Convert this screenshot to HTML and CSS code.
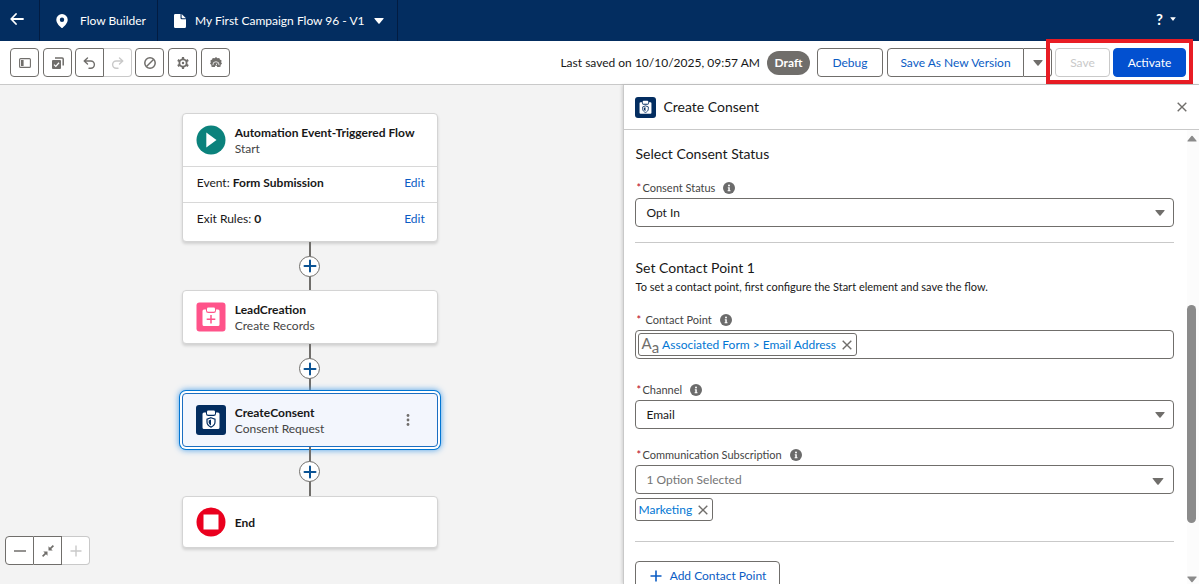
FILE: index.html
```html
<!DOCTYPE html>
<html lang="en">
<head>
<meta charset="utf-8">
<title>Flow Builder</title>
<link rel="stylesheet" href="styles.css">
</head>
<body>
<svg class="defs" aria-hidden="true">
  <symbol id="consent" viewBox="0 0 30 30">
    <path fill="#fff" d="M7 7.500h3v1.200A2.300 2.300 0 0 0 12.300 11h5.400A2.300 2.300 0 0 0 20 8.700V7.500h2A1.500 1.500 0 0 1 23.500 9v13.500A1.500 1.500 0 0 1 22 24H8a1.500 1.500 0 0 1-1.500-1.500V9A1.500 1.500 0 0 1 8 7.500z"/>
    <rect x="11" y="5.500" width="8" height="4.200" rx="1.300" fill="#fff"/>
    <path fill="#fff" stroke="#032d60" stroke-width="1.200" d="M15 12.700l4 1.400v3c0 2.400-1.700 4.100-4 5-2.300-.9-4-2.600-4-5v-3z"/>
    <path fill="#032d60" d="M15 14.500l-2.300.9v1.900c0 1.400.9 2.500 2.300 3.200z"/>
  </symbol>
  <symbol id="down" viewBox="0 0 10 6"><path fill="currentColor" d="M.8 0h8.400q.8 0 .3.700L5.600 5.500q-.6.700-1.200 0L.5.700Q0 0 .8 0z"/></symbol>
  <symbol id="close" viewBox="0 0 10 10"><path fill="none" stroke="currentColor" stroke-width="1.400" d="M.7.700l8.600 8.600M9.300.700L.7 9.300"/></symbol>
  <symbol id="plus" viewBox="0 0 14 14"><path fill="none" stroke="currentColor" stroke-width="2" stroke-linecap="round" d="M7 1.500v11M1.500 7h11"/></symbol>
  <symbol id="info" viewBox="0 0 12 12"><circle cx="6" cy="6" r="6" fill="#6b6b6b"/><circle cx="6" cy="3.400" r="1" fill="#fff"/><path fill="#fff" d="M4.800 5.200h2v3h.7v1H4.600v-1h.7v-2h-.5z"/></symbol>
</svg>

<header class="topbar">
  <button class="back" aria-label="Back"><svg width="14" height="12" viewBox="0 0 14 12"><path fill="none" stroke="#fff" stroke-width="1.800" stroke-linecap="round" stroke-linejoin="round" d="M6 1L1.200 6 6 11M1.500 6H13"/></svg></button>
  <div class="app">
    <svg width="12" height="14" viewBox="0 0 12 14"><path fill="#fff" fill-rule="evenodd" d="M6 0a5.700 5.700 0 0 1 5.700 5.700c0 3.300-3.300 6.400-5 8q-.7.500-1.400 0c-1.700-1.600-5-4.700-5-8A5.700 5.700 0 0 1 6 0zm0 3.500a2.200 2.200 0 1 0 0 4.400 2.200 2.200 0 0 0 0-4.400z"/></svg>
    <span>Flow Builder</span>
  </div>
  <button class="flow-name">
    <svg width="12" height="14" viewBox="0 0 12 14"><path fill="#fff" d="M1.300 0h5.200v4q0 1.300 1.300 1.300H12v7.200q0 1.500-1.300 1.500H1.300Q0 14 0 12.700V1.300Q0 0 1.300 0zM7.600 0L12 4.300H8.300q-.7 0-.7-.7z"/></svg>
    <span>My First Campaign Flow 96 - V1</span>
    <svg width="10" height="6"><use href="#down"/></svg>
  </button>
  <button class="help" aria-label="Help"><span>?</span><svg width="6" height="4"><use href="#down"/></svg></button>
</header>

<div class="toolbar">
  <div class="tools">
    <button class="tool" aria-label="Toggle toolbox"><svg width="12" height="10" viewBox="0 0 12 10"><rect x=".6" y=".6" width="10.800" height="8.800" rx="1" fill="none" stroke="#706e6b" stroke-width="1.100"/><path fill="#706e6b" d="M2 2h2.600v6H2z"/></svg></button>
    <button class="tool" aria-label="Select elements"><svg width="12" height="12" viewBox="0 0 12 12"><path fill="none" stroke="#706e6b" stroke-width="1.500" d="M3 1h7.200q1 0 1 1v6.500"/><rect x="0" y="3" width="9" height="9" rx="1" fill="#706e6b"/><path fill="none" stroke="#fff" stroke-width="1.300" d="M2 7.600l1.800 1.800L7 5.800"/></svg></button>
  </div>
  <div class="pair">
    <button class="tool" aria-label="Undo"><svg width="13" height="12" viewBox="0 0 13 12"><path fill="none" stroke="#706e6b" stroke-width="1.400" stroke-linecap="round" stroke-linejoin="round" d="M4.500 1L1.200 4l3.300 3M1.500 4h6.300a3.600 3.600 0 0 1 0 7.200H6"/></svg></button>
    <button class="tool off" disabled aria-label="Redo"><svg width="13" height="12" viewBox="0 0 13 12"><path fill="none" stroke="#c9c9c9" stroke-width="1.400" stroke-linecap="round" stroke-linejoin="round" d="M8.500 1l3.300 3-3.300 3M11.500 4H5.200a3.600 3.600 0 0 0 0 7.200H7"/></svg></button>
  </div>
  <div class="tools">
    <button class="tool" aria-label="Errors"><svg width="12" height="12" viewBox="0 0 12 12"><circle cx="6" cy="6" r="5.200" fill="none" stroke="#706e6b" stroke-width="1.500"/><path stroke="#706e6b" stroke-width="1.500" d="M2.500 9.500l7-7"/></svg></button>
    <button class="tool" aria-label="Settings"><svg width="12" height="12" viewBox="0 0 12 12"><circle cx="6" cy="6" r="3.600" fill="none" stroke="#706e6b" stroke-width="1.800"/><circle cx="6" cy="6" r="1.200" fill="#706e6b"/><path stroke="#706e6b" stroke-width="2.200" d="M6 0v2.400M6 9.600V12M.8 3l2 1.200M9.200 7.800l2 1.200M.8 9l2-1.200M9.200 4.200l2-1.200"/></svg></button>
    <button class="tool" aria-label="Assistant"><svg width="12" height="11" viewBox="0 0 12 11"><path fill="#706e6b" d="M6 0l1.400 1.200 1.900-.3.600 1.700 1.700.9-.4 1.700.8 1.500-1.300 1.100-.2 1.900-1.700.2H2.900l-1.400-.2-.2-1.900L0 6.700l.8-1.500L.4 3.500l1.700-.9.600-1.700 1.900.3z"/><path fill="none" stroke="#fff" stroke-width=".8" d="M2.900 8.200q-.3-3.500 3.100-3.500t3.100 3.500M6 8.500l1-2"/><path fill="#fff" d="M4.800 10a1.200 1.200 0 0 1 2.400 0z"/></svg></button>
  </div>
  <span class="saved">Last saved on 10/10/2025, 09:57 AM</span>
  <span class="badge">Draft</span>
  <button class="btn debug">Debug</button>
  <div class="split">
    <button class="btn version">Save As New Version</button>
    <button class="btn more" aria-label="More save options"><svg width="10" height="6"><use href="#down"/></svg></button>
  </div>
  <div class="primary-actions">
    <button class="btn save" disabled>Save</button>
    <button class="btn activate">Activate</button>
  </div>
</div>

<main class="workspace">
  <section class="canvas">
    <article class="card start">
      <div class="card-head">
        <svg width="30" height="30" viewBox="0 0 30 30"><circle cx="15" cy="15" r="14.500" fill="#0b827c"/><path fill="#fff" d="M10.300 7.500v15L20.500 15z"/></svg>
        <div><h3>Automation Event-Triggered Flow</h3><p>Start</p></div>
      </div>
      <div class="card-row"><span>Event: <b>Form Submission</b></span><a href="#event">Edit</a></div>
      <div class="card-row last"><span>Exit Rules: <b>0</b></span><a href="#exit">Edit</a></div>
    </article>
    <div class="connector"><button class="add" aria-label="Add element"><svg width="14" height="14"><use href="#plus"/></svg></button></div>
    <article class="card">
      <div class="card-head">
        <svg width="30" height="30" viewBox="0 0 30 30"><rect x=".5" y=".5" width="29" height="29" rx="3" fill="#ff538a"/><path fill="#fff" d="M7 7.500h3v1.200A2.300 2.300 0 0 0 12.300 11h5.400A2.300 2.300 0 0 0 20 8.700V7.500h2A1.500 1.500 0 0 1 23.500 9v13.500A1.500 1.500 0 0 1 22 24H8a1.500 1.500 0 0 1-1.500-1.500V9A1.500 1.500 0 0 1 8 7.500z"/><rect x="11" y="5.500" width="8" height="4.200" rx="1.300" fill="#fff"/><path stroke="#ff538a" stroke-width="1.500" d="M15 13v8.500M10.700 17.200h8.600"/></svg>
        <div><h3>LeadCreation</h3><p>Create Records</p></div>
      </div>
    </article>
    <div class="connector"><button class="add" aria-label="Add element"><svg width="14" height="14"><use href="#plus"/></svg></button></div>
    <article class="card selected">
      <div class="card-head">
        <svg class="navy" width="30" height="30"><use href="#consent"/></svg>
        <div><h3>CreateConsent</h3><p>Consent Request</p></div>
        <button class="kebab" aria-label="More actions"><svg width="4" height="12" viewBox="0 0 4 12"><g fill="#706e6b"><circle cx="2" cy="1.500" r="1.400"/><circle cx="2" cy="6" r="1.400"/><circle cx="2" cy="10.500" r="1.400"/></g></svg></button>
      </div>
    </article>
    <div class="connector"><button class="add" aria-label="Add element"><svg width="14" height="14"><use href="#plus"/></svg></button></div>
    <article class="card end">
      <div class="card-head">
        <svg width="30" height="30" viewBox="0 0 30 30"><circle cx="15" cy="15" r="14.500" fill="#ea001e"/><path fill="#fff" d="M7.500 7.500h15v15h-15z"/></svg>
        <div><h3>End</h3></div>
      </div>
    </article>

    <div class="zoom">
      <button class="tool" aria-label="Zoom out"><svg width="12" height="12" viewBox="0 0 12 12"><path stroke="#706e6b" stroke-width="1.500" d="M0 6h12"/></svg></button>
      <button class="tool" aria-label="Fit to view"><svg width="12" height="12" viewBox="0 0 12 12"><path fill="#706e6b" d="M6.500 5.500V1.300l1.500 1.500L10.800 0 12 1.200 9.200 4l1.500 1.500zM5.500 6.500v4.200L4 9.200 1.200 12 0 10.800 2.800 8 1.300 6.500z"/></svg></button>
      <button class="tool off" disabled aria-label="Zoom in"><svg width="12" height="12" viewBox="0 0 12 12"><path stroke="#c9c9c9" stroke-width="1.400" d="M6 .5v11M.5 6h11"/></svg></button>
    </div>
  </section>

  <aside class="panel">
    <div class="panel-head">
      <svg class="navy" width="21" height="21"><use href="#consent"/></svg>
      <h2>Create Consent</h2>
      <button class="x" aria-label="Close panel"><svg width="10" height="10"><use href="#close"/></svg></button>
    </div>
    <div class="panel-body">
      <form class="form">
        <h2>Select Consent Status</h2>
        <div class="label status-label"><abbr>*</abbr><label for="status">Consent Status</label><svg width="12" height="12"><use href="#info"/></svg></div>
        <div class="field"><select id="status"><option>Opt In</option></select><svg class="arrow" width="10" height="6"><use href="#down"/></svg></div>
        <hr class="rule-one">
        <h2>Set Contact Point 1</h2>
        <p class="hint">To set a contact point, first configure the Start element and save the flow.</p>
        <div class="label point-label"><abbr>*</abbr><label for="point">Contact Point</label><svg width="12" height="12"><use href="#info"/></svg></div>
        <div class="field combo">
          <span class="pill"><span class="type"><span>A</span><span class="small">a</span></span><a href="#point">Associated Form &gt; Email Address</a><button type="button" class="x" aria-label="Remove"><svg width="10" height="10"><use href="#close"/></svg></button></span>
          <input id="point" type="text">
        </div>
        <div class="label channel-label"><abbr>*</abbr><label for="channel">Channel</label><svg width="12" height="12"><use href="#info"/></svg></div>
        <div class="field"><select id="channel"><option>Email</option></select><svg class="arrow" width="10" height="6"><use href="#down"/></svg></div>
        <div class="label sub-label"><abbr>*</abbr><label for="sub">Communication Subscription</label><svg width="12" height="12"><use href="#info"/></svg></div>
        <div class="field"><input id="sub" type="text" placeholder="1 Option Selected"><svg class="arrow wide" width="12" height="7"><use href="#down"/></svg></div>
        <span class="pill tag"><a href="#marketing">Marketing</a><button type="button" class="x" aria-label="Remove Marketing"><svg width="10" height="10"><use href="#close"/></svg></button></span>
        <hr class="rule-two">
        <button type="button" class="btn add-point"><svg width="12" height="12" viewBox="0 0 12 12"><path stroke="currentColor" stroke-width="1.600" d="M6 .5v11M.5 6h11"/></svg>Add Contact Point</button>
      </form>
      <div class="scrollbar" aria-hidden="true">
        <svg class="up" width="10" height="7"><use href="#down"/></svg>
        <div class="track"><div class="thumb"></div></div>
        <svg width="10" height="7"><use href="#down"/></svg>
      </div>
    </div>
  </aside>
</main>
</body>
</html>
```
FILE: styles.css
```css
* { box-sizing: border-box; }
body {
  margin: 0;
  height: 100vh;
  display: flex;
  flex-direction: column;
  overflow: hidden;
  font: 12px/16px Lato, "Open Sans", sans-serif;
  color: #181818;
  background: #fff;
}
button, input, select { font: inherit; color: inherit; }
button { padding: 0; border: 0; background: none; display: flex; align-items: center; justify-content: center; }
h2, h3, p { margin: 0; }
a { color: #0b5cc4; text-decoration: none; }
svg { display: block; flex: none; }
.defs { position: absolute; width: 0; height: 0; }

.topbar { flex: 0 0 41px; display: flex; align-items: stretch; background: #032d60; color: #fff; }
.topbar > * { padding-bottom: 3px; }
.back { width: 40px; padding-right: 6px; border-right: 1px solid #021c42; }
.app { display: flex; align-items: center; gap: 12px; padding: 0 11px 0 16px; border-right: 1px solid #021c42; }
.flow-name { gap: 9px; padding: 0 13px 0 16px; border-right: 1px solid #021c42; }
.help { margin-left: auto; padding-right: 23px; gap: 7px; font-weight: 700; font-size: 15px; }

.toolbar { flex: 0 0 44px; display: flex; align-items: center; padding: 0 13px 0 10px; gap: 3px; border-bottom: 1px solid #c9c9c9; }
.tools { display: flex; gap: 4px; }
.pair, .zoom, .split { display: flex; }
.tool { width: 29px; height: 29px; border: 1px solid #706e6b; border-radius: 4px; background: #fff; }
.tool.off { border-color: #c9c9c9; }
.pair .tool:first-child, .zoom .tool:not(:last-child) { border-radius: 4px 0 0 4px; }
.pair .tool:last-child, .zoom .tool:last-child { border-radius: 0 4px 4px 0; border-left: 0; width: 28px; }
.saved { margin-left: auto; white-space: nowrap; }
.badge { width: 43px; margin: 0 4px; padding: 4px 0; border-radius: 12px; background: #706e6b; color: #fff; font-weight: 700; text-align: center; }
.btn { height: 29px; border: 1px solid #706e6b; border-radius: 4px; background: #fff; color: #0b5cc4; white-space: nowrap; }
.debug { width: 66px; }
.split { margin-left: 1px; }
.version { width: 137px; border-radius: 4px 0 0 4px; }
.more { width: 28px; border-left: 0; border-radius: 0 4px 4px 0; color: #706e6b; }
.primary-actions { position: relative; display: flex; gap: 3px; }
.primary-actions::after { content: ""; position: absolute; inset: -9px -7px -7px -9px; border: 4px solid #e81c24; pointer-events: none; }
.save { width: 55px; border-color: #c9c9c9; color: #c9c9c9; }
.activate { width: 73px; border-color: #0250d0; background: #0250d0; color: #fff; }

.workspace { flex: 1; min-height: 0; display: flex; }
.canvas { position: relative; flex: 1; min-width: 0; display: flex; flex-direction: column; align-items: center; padding: 28px 4px 0 0; background: #f3f3f3; overflow: hidden; }
.card { width: 256px; flex: none; border: 1px solid #d4d4d4; border-radius: 4px; background: #fff; box-shadow: 0 2px 3px rgba(0, 0, 0, .14); }
.card-head { display: flex; align-items: center; gap: 9px; height: 52px; padding: 0 13px; }
.card-head h3 { font-size: 12px; line-height: 17px; font-weight: 700; white-space: nowrap; }
.card-head p { color: #444; line-height: 16px; }
.card-row { display: flex; justify-content: space-between; height: 36px; padding: 8px 12px 0 14px; border-top: 1px solid #d8d8d8; }
.card-row.last { height: 39px; }
.card.end .card-head { height: 50px; }
.card.selected { background: #f3f6fd; border-color: #1b6ec2; box-shadow: 0 0 0 2px #fff, 0 0 0 3px #0176d3, 0 0 6px 3px #4a9fea; }
.kebab { margin-left: auto; width: 24px; height: 24px; margin-right: 4px; }
.connector { width: 2px; height: 49px; flex: none; background: #706e6b; display: flex; justify-content: center; align-items: center; }
.start + .connector { height: 48px; }
.add { width: 21px; height: 21px; flex: none; border: 1px solid #706e6b; border-radius: 50%; background: #fff; color: #0b5394; }
.zoom { position: absolute; left: 5px; bottom: 19px; }
.zoom .tool:nth-child(2) { border-left: 0; border-radius: 0; width: 28px; }
.navy { background: #032d60; border-radius: 3px; }

.panel { position: relative; flex: 0 0 48%; display: flex; flex-direction: column; border-left: 1px solid #c9c9c9; box-shadow: -1px 0 3px rgba(0, 0, 0, .15); background: #fff; }
.panel h2 { font-size: 14px; line-height: 22px; font-weight: 400; }
.panel-head { flex: 0 0 45px; display: flex; align-items: center; gap: 7px; padding: 0 12px 0 11px; border-bottom: 1px solid #c9c9c9; }
.panel-head .x { margin-left: auto; }
.x { color: #706e6b; }
.panel-body { flex: 1; min-height: 0; display: flex; }
.form { flex: 1; min-width: 0; padding: 13px 13px 0 11px; overflow: hidden; }
.label { display: flex; align-items: center; color: #444; font-size: 11px; margin-bottom: 2px; padding-left: 1px; }
.label abbr { color: #ba0517; width: 6px; }
.label svg { margin-left: 8px; }
.status-label { margin-top: 15px; }
.point-label { margin-top: 17px; }
.point-label abbr { width: 9px; }
.channel-label { margin-top: 23px; }
.sub-label { margin-top: 18px; }
.field { position: relative; height: 29px; border: 1px solid #706e6b; border-radius: 4px; background: #fff; display: flex; align-items: center; }
.field select, .field input { flex: 1; min-width: 0; height: 27px; padding: 0 10px; border: 0; background: none; appearance: none; outline: 0; }
.field input::placeholder { color: #747474; opacity: 1; }
.arrow { position: absolute; right: 8px; color: #706e6b; pointer-events: none; }
.arrow.wide { right: 9px; margin-top: 4px; }
hr { margin: 0; border: 0; border-top: 1px solid #c9c9c9; }
.rule-one { margin: 15px 0 14px; }
.rule-two { margin: 20px 0 19px; }
.hint { line-height: 16px; font-size: 11px; }
.pill { display: flex; align-items: center; height: 23px; border: 1px solid #706e6b; border-radius: 3px; gap: 6px; padding: 0 4px 0 2px; background: #fff; white-space: nowrap; }
.pill a { color: #0176d3; }
.combo .pill { margin-left: 2px; }
.type { display: flex; color: #706e6b; font-size: 15px; line-height: 14px; margin-right: -3px; }
.type .small { padding-top: 4px; }
.tag { width: max-content; margin-top: 4px; }
.add-point { width: 145px; gap: 8px; }

.scrollbar { flex: 0 0 12px; display: flex; flex-direction: column; align-items: center; padding: 5px 2px 1px 0; background: #fcfcfc; color: #8b8b8b; }
.up { transform: rotate(180deg); }
.track { flex: 1; align-self: stretch; display: flex; flex-direction: column; padding: 163px 0 53px; }
.thumb { flex: 1; width: 9px; border-radius: 5px; background: #8b8b8b; }
```
